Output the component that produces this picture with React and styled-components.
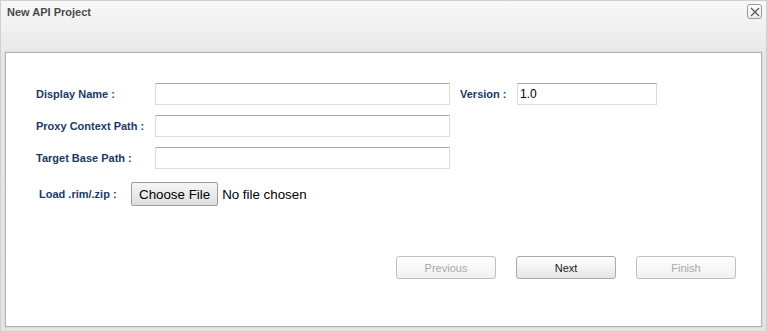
import styled, { createGlobalStyle } from "styled-components";

const GlobalStyle = createGlobalStyle`
  html, body {
    margin: 0;
    padding: 0;
    background: #ffffff;
  }
  body {
    font-family: "Liberation Sans", Arial, sans-serif;
  }
`;

export default function App() {
  return (
    <>
      <GlobalStyle />
      <Dialog>
        <TitleBar>
          <Title>New API Project</Title>
          <CloseButton aria-label="Close">
            <svg width="10" height="10" viewBox="0 0 10 10">
              <path d="M1 1 L9 9 M9 1 L1 9" stroke="#555" strokeWidth="1.2" />
            </svg>
          </CloseButton>
        </TitleBar>
        <Panel>
          <Row>
            <Label>Display Name :</Label>
            <TextInput width={295} />
            <Label width={57} $indent={10}>
              Version :
            </Label>
            <TextInput width={140} defaultValue="1.0" />
          </Row>
          <Row>
            <Label>Proxy Context Path :</Label>
            <TextInput width={295} />
          </Row>
          <Row>
            <Label>Target Base Path :</Label>
            <TextInput width={295} />
          </Row>
          <FileRow>
            <Label width={92} $indent={3}>
              Load .rim/.zip :
            </Label>
            <FileButton type="button">Choose File</FileButton>
            <FileStatus>No file chosen</FileStatus>
          </FileRow>
          <Actions>
            <WizardButton disabled>Previous</WizardButton>
            <WizardButton>Next</WizardButton>
            <WizardButton disabled>Finish</WizardButton>
          </Actions>
        </Panel>
      </Dialog>
    </>
  );
}

const Dialog = styled.div`
  box-sizing: border-box;
  width: 767px;
  height: 332px;
  border: 1px solid #cfcfcf;
  background: linear-gradient(#f8f8f8, #e6e6e6 60px, #e4e4e4);
  display: flex;
  flex-direction: column;
  padding: 0 4px 4px 4px;
`;

const TitleBar = styled.div`
  height: 51px;
  display: flex;
  align-items: flex-start;
  justify-content: space-between;
`;

const Title = styled.div`
  font-size: 11px;
  font-weight: bold;
  color: #4a4a4a;
  padding: 5px 0 0 2px;
`;

const CloseButton = styled.button`
  box-sizing: border-box;
  margin: 3px 0 0 0;
  width: 15px;
  height: 15px;
  padding: 0;
  border: 1px solid #9a9a9a;
  border-radius: 3px;
  background: linear-gradient(#ffffff, #ececec);
  display: flex;
  align-items: center;
  justify-content: center;
`;

const Panel = styled.div`
  flex: 1;
  background: #ffffff;
  border: 1px solid #b2b2b2;
  box-shadow: 0 0 0 1px #dcdcdc;
  padding: 30px 25px 0 30px;
  display: flex;
  flex-direction: column;
  gap: 10px;
`;

const Row = styled.div`
  display: flex;
  align-items: center;
  height: 22px;
`;

const FileRow = styled(Row)`
  height: 24px;
  margin-top: 3px;
`;

const Label = styled.label`
  box-sizing: border-box;
  width: ${(p) => p.width || 119}px;
  margin-left: ${(p) => p.$indent || 0}px;
  font-size: 11px;
  font-weight: bold;
  color: #1c3966;
  white-space: nowrap;
`;

const TextInput = styled.input`
  box-sizing: border-box;
  width: ${(p) => p.width}px;
  height: 22px;
  border: 1px solid #dcdcdc;
  border-top-color: #a8a8a8;
  padding: 0 2px;
  font-family: "Liberation Sans", Arial, sans-serif;
  font-size: 12px;
  color: #000;
  outline: none;
`;

const FileButton = styled.button`
  box-sizing: border-box;
  height: 24px;
  padding: 0 7px;
  border: 1px solid #9c9c9c;
  border-radius: 2px;
  background: linear-gradient(#f6f6f6, #dedede);
  font-family: "Liberation Sans", Arial, sans-serif;
  font-size: 13.33px;
  color: #000;
`;

const FileStatus = styled.span`
  margin-left: 4px;
  font-size: 13.33px;
  color: #000;
`;

const Actions = styled.div`
  display: flex;
  justify-content: flex-end;
  gap: 20px;
  margin-top: 40px;
`;

const WizardButton = styled.button`
  box-sizing: border-box;
  width: 100px;
  height: 23px;
  border: 1px solid #aaaaaa;
  border-radius: 3px;
  background: linear-gradient(#ffffff, #e6e6e6);
  font-family: "Liberation Sans", Arial, sans-serif;
  font-size: 11px;
  color: #1a1a1a;

  &:disabled {
    color: #a8a8a8;
    border-color: #c0c0c0;
    background: linear-gradient(#ffffff, #f0f0f0);
  }
`;
